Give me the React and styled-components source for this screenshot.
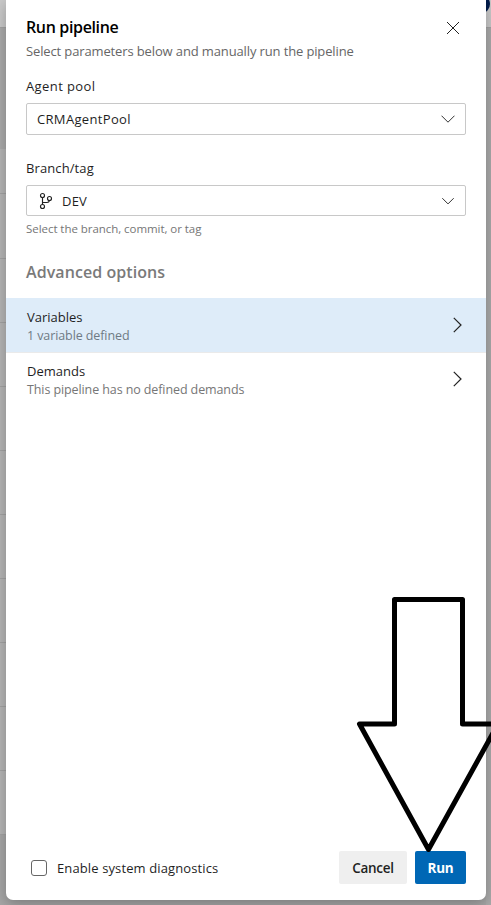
import React from "react";
import styled, { createGlobalStyle } from "styled-components";

const GlobalStyle = createGlobalStyle`
  *, *::before, *::after { box-sizing: border-box; }
  body {
    margin: 0;
    overflow: hidden;
    font-family: "Open Sans", "Noto Sans", sans-serif;
    color: #1f1f1f;
  }
  button { font-family: inherit; }
`;

const Page = styled.div`
  position: relative;
  display: grid;
  grid-template-columns: 6px 480px 5px;
  width: 491px;
  height: 905px;
  overflow: hidden;
  background: #a6a6a6;
`;

const Strip = styled.div`
  display: flex;
  flex-direction: column;
  overflow: hidden;
`;

const StripBlock = styled.div`
  flex: none;
  height: ${(p) => p.$height}px;
  background: ${(p) => p.$color || "#b5b5b5"};
  border-bottom: ${(p) => (p.$line ? "1px solid #a2a2a2" : "none")};
`;

const Avatar = styled.div`
  width: 16px;
  height: 18px;
  margin: -5px 0 0 -12px;
  border-radius: 50%;
  background: #001c4b;
`;

const Panel = styled.section`
  position: relative;
  display: flex;
  flex-direction: column;
  height: 900px;
  background: #fff;
  border-radius: 0 0 7px 7px;
  box-shadow: 0 4px 14px rgba(0, 0, 0, 0.26);
`;

const Text = styled.div`
  margin: 0;
  font-size: ${(p) => p.$size || 13}px;
  line-height: ${(p) => p.$line || 20}px;
  font-weight: ${(p) => p.$weight || 400};
  letter-spacing: ${(p) => p.$track || 0}px;
  color: ${(p) => p.$color || "#1f1f1f"};
  white-space: nowrap;
`;

const Header = styled.header`
  display: flex;
  justify-content: space-between;
  padding: 15px 26px 0 20px;
  height: 76px;
`;

const CloseButton = styled.button`
  display: flex;
  width: 14px;
  height: 14px;
  margin-top: 6px;
  padding: 0;
  border: 0;
  background: none;
`;

const Field = styled.div`
  display: flex;
  flex-direction: column;
  height: ${(p) => p.$height}px;
  padding: 0 20px;
`;

const Select = styled.div`
  display: flex;
  align-items: center;
  flex: none;
  height: ${(p) => p.$height}px;
  margin: 7px 0 3px;
  padding: 0 10px;
  border: 1px solid #c8c8c8;
  border-radius: 2px;

  & > svg:last-child { margin-left: auto; }
`;

const BranchIcon = styled.svg`
  margin: 0 8px 0 1px;
`;

const SectionTitle = styled.div`
  height: 38px;
  padding-left: 20px;
`;

const OptionRow = styled.div`
  display: flex;
  align-items: center;
  justify-content: space-between;
  height: ${(p) => (p.$active ? 55 : 52)}px;
  padding: 0 24px 0 21px;
  background: ${(p) => (p.$active ? "#deecf9" : "#fff")};
  border-bottom: ${(p) => (p.$active ? "1px solid #eaeaea" : "none")};
`;

const OptionText = styled.div`
  display: flex;
  flex-direction: column;
  padding-top: 4px;
`;

const Footer = styled.footer`
  display: flex;
  align-items: center;
  height: 33px;
  margin: auto 20px 16px 25px;
`;

const CheckLabel = styled.div`
  display: flex;
  align-items: center;
  gap: 10px;
  padding-top: 1px;
`;

const Checkbox = styled.span`
  width: 16px;
  height: 16px;
  border: 1px solid #666;
  border-radius: 3px;
`;

const Actions = styled.div`
  display: flex;
  gap: 8px;
  margin-left: auto;
`;

const ActionButton = styled.button`
  width: ${(p) => p.$width}px;
  height: 33px;
  padding: 1px 0 0;
  border: 0;
  border-radius: 2px;
  background: ${(p) => (p.$primary ? "#0067b5" : "#efefef")};
  color: ${(p) => (p.$primary ? "#fff" : "#1f1f1f")};
  font-size: 13.5px;
  font-weight: ${(p) => (p.$primary ? 700 : 600)};
  letter-spacing: ${(p) => (p.$primary ? -0.3 : -0.25)}px;
`;

const Arrow = styled.svg`
  position: absolute;
  left: 350px;
  top: 590px;
  pointer-events: none;
`;

const Chevron = () => (
  <svg width="14" height="8" viewBox="0 0 14 8" fill="none" stroke="#333" strokeWidth="1">
    <path d="M0.5 0.7 7 7.2 13.5 0.7" />
  </svg>
);

const SmallChevron = () => (
  <svg width="14" height="8" viewBox="0 0 14 8" fill="none" stroke="#333" strokeWidth="1">
    <path d="M1.3 1.2 7 6.9 12.7 1.2" />
  </svg>
);

const ChevronRight = () => (
  <svg width="9" height="16" viewBox="0 0 9 16" fill="none" stroke="#222" strokeWidth="1.2">
    <path d="M0.8 0.8 8 8 0.8 15.2" />
  </svg>
);

const rowHeights = [45, 65, 64, 64, 64, 64, 64, 64, 64, 64, 64];

export default function App() {
  return (
    <>
      <GlobalStyle />
      <Page>
        <Strip>
          <StripBlock $height={28} $color="#c9c9c9" $line />
          <StripBlock $height={121} $color="#aaaaaa" />
          {rowHeights.map((h, i) => (
            <StripBlock key={i} $height={h} $line />
          ))}
        </Strip>
        <Panel>
          <Header>
            <div>
              <Text as="h1" $size={16} $line={24} $weight={600} $track={-0.35} $color="#000">
                Run pipeline
              </Text>
              <Text $line={24} $track={-0.13} $color="#666">
                Select parameters below and manually run the pipeline
              </Text>
            </div>
            <CloseButton aria-label="Close">
              <svg width="14" height="14" viewBox="0 0 14 14" stroke="#222" strokeWidth="1">
                <path d="M1 1 13 13M13 1 1 13" />
              </svg>
            </CloseButton>
          </Header>
          <Field $height={82}>
            <Text $track={0.4}>Agent pool</Text>
            <Select $height={32}>
              <Text $track={0.33}>CRMAgentPool</Text>
              <Chevron />
            </Select>
          </Field>
          <Field $height={102}>
            <Text $track={0.1}>Branch/tag</Text>
            <Select $height={31}>
              <BranchIcon width="16" height="18" viewBox="0 0 16 18" fill="none" stroke="#222" strokeWidth="1.15">
                <circle cx="4.5" cy="3.5" r="2" />
                <circle cx="4.5" cy="14.5" r="2" />
                <circle cx="11.5" cy="6.5" r="2" />
                <path d="M4.5 5.5V12.5M4.5 10.5H9Q11 10.5 11.5 8.5" />
              </BranchIcon>
              <Text $track={0.2}>DEV</Text>
              <SmallChevron />
            </Select>
            <Text $size={11.5} $track={-0.05} $color="#767676">Select the branch, commit, or tag</Text>
          </Field>
          <SectionTitle>
            <Text $size={16} $line={24} $weight={600} $track={0.07} $color="#7a7a7a">Advanced options</Text>
          </SectionTitle>
          <OptionRow $active>
            <OptionText>
              <Text $line={18}>Variables</Text>
              <Text $size={12.5} $track={-0.1} $color="#6f7a84">1 variable defined</Text>
            </OptionText>
            <ChevronRight />
          </OptionRow>
          <OptionRow>
            <OptionText>
              <Text $line={18}>Demands</Text>
              <Text $size={12.5} $track={-0.1} $color="#767676">This pipeline has no defined demands</Text>
            </OptionText>
            <ChevronRight />
          </OptionRow>
          <Footer>
            <CheckLabel>
              <Checkbox role="checkbox" aria-checked="false" />
              <Text $track={0.12}>Enable system diagnostics</Text>
            </CheckLabel>
            <Actions>
              <ActionButton $width={68}>Cancel</ActionButton>
              <ActionButton $width={51} $primary>Run</ActionButton>
            </Actions>
          </Footer>
        </Panel>
        <Strip>
          <StripBlock $height={28} $color="#c9c9c9" $line>
            <Avatar />
          </StripBlock>
          <StripBlock $height={877} $color="#aaaaaa" />
        </Strip>
        <Arrow width="141" height="266" viewBox="350 590 141 266" fill="none" stroke="#000" strokeWidth="5" strokeLinejoin="round">
          <path d="M394.5 599.5H462.5V724H498L428.5 849.5L359.5 724H394.5Z" />
        </Arrow>
      </Page>
    </>
  );
}
